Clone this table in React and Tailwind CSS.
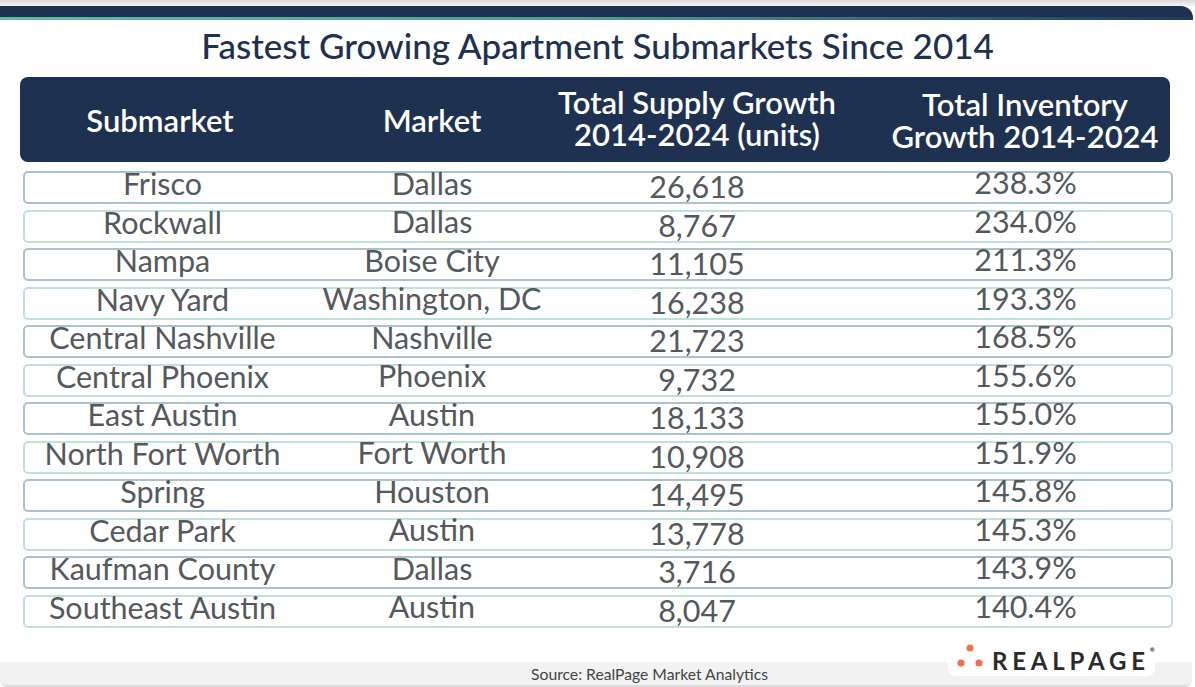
import React from "react";

const rows = [
  ["Frisco", "Dallas", "26,618", "238.3%"],
  ["Rockwall", "Dallas", "8,767", "234.0%"],
  ["Nampa", "Boise City", "11,105", "211.3%"],
  ["Navy Yard", "Washington, DC", "16,238", "193.3%"],
  ["Central Nashville", "Nashville", "21,723", "168.5%"],
  ["Central Phoenix", "Phoenix", "9,732", "155.6%"],
  ["East Austin", "Austin", "18,133", "155.0%"],
  ["North Fort Worth", "Fort Worth", "10,908", "151.9%"],
  ["Spring", "Houston", "14,495", "145.8%"],
  ["Cedar Park", "Austin", "13,778", "145.3%"],
  ["Kaufman County", "Dallas", "3,716", "143.9%"],
  ["Southeast Austin", "Austin", "8,047", "140.4%"],
];

export default function App() {
  return (
    <div
      className="relative w-[1195px] h-[687px] overflow-hidden bg-white"
      style={{ fontFamily: "Lato, 'Open Sans', sans-serif" }}
    >
      {/* top band */}
      <div className="h-[6px] bg-gradient-to-b from-[#d9d9d9] to-[#f4f4f4]" />
      <div className="mr-[2px] rounded-tr-[12px] overflow-hidden">
        <div className="h-[11px] bg-[#1e3150]" />
        <div className="h-[3px] bg-gradient-to-r from-[#66b9a5] via-[#4f9a98] to-[#1f3b55]" />
      </div>

      {/* title */}
      <h1 className="mt-[6px] text-center text-[35px] leading-[38px] text-[#1e3150] font-medium">
        Fastest Growing Apartment Submarkets Since 2014
      </h1>

      {/* header */}
      <div className="mt-[13px] ml-[20px] w-[1150px] h-[85px] rounded-[8px] bg-[#1e3150] grid grid-cols-[280px_264px_266px_1fr] items-center text-white font-semibold text-[31px] leading-[32px] text-center whitespace-nowrap">
        <div>Submarket</div>
        <div>Market</div>
        <div className="-mx-[20px] -mt-[3px]">
          Total Supply Growth
          <br />
          2014-2024 (units)
        </div>
        <div className="pl-[50px] pt-[1px]">
          Total Inventory
          <br />
          Growth 2014-2024
        </div>
      </div>

      {/* rows */}
      <div className="mt-[9px] ml-[23px] w-[1150px] flex flex-col gap-[5.5px]">
        {rows.map((r, i) => (
          <div
            key={r[0]}
            className={`h-[33px] rounded-[5px] border-2 grid grid-cols-[275px_264px_266px_1fr] items-center text-center text-[30.5px] leading-[30px] text-[#54595d] whitespace-nowrap ${
              i % 2 === 0 ? "border-[#a9c3cb]" : "border-[#bde3d7]"
            }`}
          >
            <div className="-mt-[9px]">{r[0]}</div>
            <div className="-mt-[10px]">{r[1]}</div>
            <div className="-mt-[3px]">{r[2]}</div>
            <div className="pl-[50px] -mt-[11px]">{r[3]}</div>
          </div>
        ))}
      </div>

      {/* footer */}
      <div className="absolute left-0 right-[3px] bottom-0 h-[25px] bg-[#f2f2f2] border-b-2 border-[#dcdcdc] rounded-b-[8px] flex items-center justify-center">
        <span className="ml-[107px] text-[15.7px] text-[#444] pt-[2px]">
          Source: RealPage Market Analytics
        </span>
      </div>

      {/* logo */}
      <div className="absolute left-[948px] top-[642px] w-[207px] h-[34px] bg-white rounded-[8px] flex items-center">
        <svg width="40" height="34" viewBox="0 0 40 34" className="shrink-0">
          <circle cx="22" cy="6" r="3.6" fill="#f0714d" />
          <circle cx="13" cy="21" r="3.6" fill="#f0714d" />
          <circle cx="31" cy="21" r="3.6" fill="#f0714d" />
        </svg>
        <span className="relative ml-[4px] mt-[4px] text-[24px] leading-none font-bold tracking-[0.2em] text-[#2b2b2b]">
          REALPAGE
          <span className="absolute -right-[5px] -top-[2px] text-[6px] tracking-normal">®</span>
        </span>
      </div>
    </div>
  );
}
